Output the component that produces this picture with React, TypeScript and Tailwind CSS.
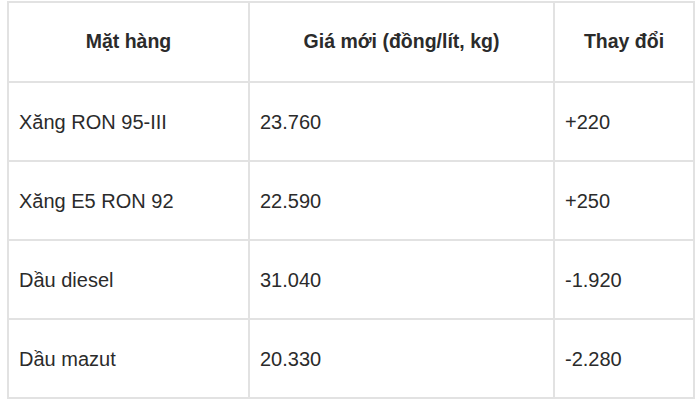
const rows = [
  ["Xăng RON 95-III", "23.760", "+220"],
  ["Xăng E5 RON 92", "22.590", "+250"],
  ["Dầu diesel", "31.040", "-1.920"],
  ["Dầu mazut", "20.330", "-2.280"],
];

export default function App() {
  return (
    <div className="w-[700px] h-[403px] bg-white pl-[7px] pt-px font-['Liberation_Sans',Arial,sans-serif] text-[#2b2b2b]">
      <table className="w-[686px] border-collapse table-fixed">
        <colgroup>
          <col className="w-[241px]" />
          <col className="w-[305px]" />
          <col className="w-[140px]" />
        </colgroup>
        <thead>
          <tr className="h-[80px]">
            <th className="border-2 border-[#e2e2e2] text-center text-[19.5px] font-bold">Mặt hàng</th>
            <th className="border-2 border-[#e2e2e2] text-center text-[19.5px] font-bold">Giá mới (đồng/lít, kg)</th>
            <th className="border-2 border-[#e2e2e2] text-center text-[19.5px] font-bold">Thay đổi</th>
          </tr>
        </thead>
        <tbody>
          {rows.map((r) => (
            <tr key={r[0]} className="h-[79px]">
              {r.map((c, i) => (
                <td key={i} className="border-2 border-[#e2e2e2] px-[10px] text-[20px]">
                  {c}
                </td>
              ))}
            </tr>
          ))}
        </tbody>
      </table>
    </div>
  );
}
